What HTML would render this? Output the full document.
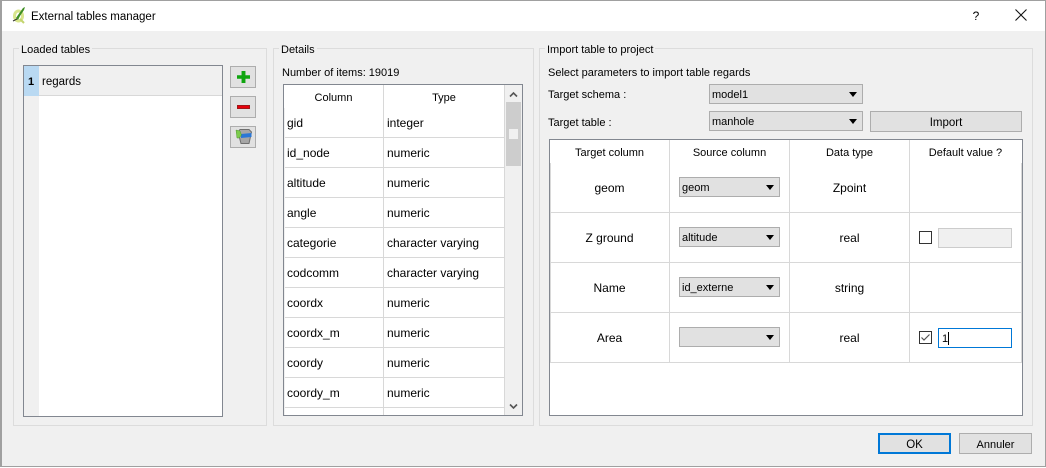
<!DOCTYPE html>
<html><head><meta charset="utf-8">
<style>
html,body{margin:0;padding:0;width:1046px;height:468px;overflow:hidden;background:#fff}
#w{position:relative;width:1046px;height:468px;font:11px "Liberation Sans",sans-serif;color:#000;background:#fff;overflow:hidden}
#w div,#w span{position:absolute;box-sizing:border-box}
#w span{white-space:pre;line-height:16px;height:16px;margin-top:1px}
#w span.t{font-size:12px;margin-top:0}
#w span.m{font-size:11.5px}
.g{border:1px solid #dcdcdc}
.b{background:#e1e1e1;border:1px solid #adadad}
.c{text-align:center}
.l{background:#d8d8d8}
.arr{width:0;height:0;border-left:4.5px solid transparent;border-right:4.5px solid transparent;border-top:5px solid #000}
</style></head><body>
<div id="w">
<div style="left:0;top:0;width:1046px;height:467px;border:1px solid #a0a0a0;border-left-width:2px;background:#fff"></div>
<div style="left:2px;top:31px;width:1043px;height:435px;background:#f0f0f0"></div>
<svg style="position:absolute;left:11px;top:6px" width="16" height="18" viewBox="0 0 16 18"><ellipse cx="7.5" cy="10" rx="5.5" ry="6.5" fill="#d8e58c"/><ellipse cx="7.5" cy="10" rx="2.5" ry="3.5" fill="#fff"/><path d="M5 12 L7 9 L12 2 L14 1 L13 4 L9 10 L7 14Z" fill="#3f8f24"/><path d="M9 13 L13 17" stroke="#c3d46f" stroke-width="2"/><path d="M2 15 L6 13" stroke="#333" stroke-width="1"/></svg>
<span class="m" style="left:31px;top:8px">External tables manager</span>
<span class="t" style="left:972px;top:8px;width:8px;text-align:center">?</span>
<svg style="position:absolute;left:1015px;top:9px" width="12" height="12"><path d="M.5 .5L11.5 11.5M11.5 .5L.5 11.5" stroke="#111" stroke-width="1.1"/></svg>

<!-- group 1 -->
<div class="g" style="left:13px;top:48px;width:254px;height:378px"></div>
<span style="left:19px;top:41px;background:#f0f0f0;padding:0 2px">Loaded tables</span>
<div style="left:23px;top:65px;width:200px;height:352px;border:1px solid #828790;background:#fff"></div>
<div style="left:24px;top:66px;width:15px;height:350px;background:#f0f0f0"></div>
<div style="left:39px;top:66px;width:183px;height:30px;background:#f0f0f0;border-bottom:1px solid #d8d8d8"></div>
<div style="left:24px;top:66px;width:15px;height:30px;background:#b9d9f2"></div>
<span style="left:28px;top:73px;font-weight:bold">1</span>
<span class="m" style="left:42px;top:73px">regards</span>
<div class="b" style="left:230px;top:66px;width:26px;height:22px"></div>
<div style="left:237px;top:71px;width:13px;height:12px;background:#0fa50f;clip-path:polygon(35% 0,65% 0,65% 35%,100% 35%,100% 65%,65% 65%,65% 100%,35% 100%,35% 65%,0 65%,0 35%,35% 35%)"></div>
<div class="b" style="left:230px;top:96px;width:26px;height:22px"></div>
<div style="left:237px;top:105px;width:13px;height:4px;background:#e8000c;border:1px solid #a01818"></div>
<div class="b" style="left:230px;top:126px;width:26px;height:22px"></div>
<svg style="position:absolute;left:235px;top:128px" width="18" height="18" viewBox="0 0 18 18"><path d="M3 4L5 1.5H14L16.5 4L14 15.5H6Z" fill="#a6a6a6" stroke="#6f6f6f"/><path d="M6 6L16.5 5V9L6 10Z" fill="#2a77d6"/><path d="M1 2L5 3L6.5 7L4 10L2 10Z" fill="#7ccb4c" stroke="#4f9a2c" stroke-width=".5"/></svg>

<!-- group 2 -->
<div class="g" style="left:273px;top:48px;width:261px;height:378px"></div>
<span style="left:279px;top:41px;background:#f0f0f0;padding:0 2px">Details</span>
<span style="left:282px;top:64px">Number of items: 19019</span>
<div style="left:283px;top:84px;width:240px;height:332px;border:1px solid #828790;background:#fff"></div>
<div style="left:284px;top:108px;width:1px;height:307px;background:#f0f0f0"></div>
<div class="l" style="left:383px;top:85px;width:1px;height:330px"></div>
<div class="l" style="left:504px;top:85px;width:1px;height:330px"></div>
<div style="left:505px;top:85px;width:17px;height:330px;background:#f0f0f0"></div>
<div style="left:506px;top:102px;width:15px;height:64px;background:#cdcdcd"></div>
<div style="left:509px;top:129px;width:9px;height:10px;background:#f0f0f0"></div>
<svg style="position:absolute;left:509px;top:91px" width="9" height="7"><path d="M1 5.5L4.5 2L8 5.5" fill="none" stroke="#555" stroke-width="1.6"/></svg>
<svg style="position:absolute;left:509px;top:403px" width="9" height="7"><path d="M1 1.5L4.5 5L8 1.5" fill="none" stroke="#555" stroke-width="1.6"/></svg>
<span class="c" style="left:284px;top:89px;width:99px">Column</span>
<span class="c" style="left:384px;top:89px;width:120px">Type</span>
<div class="l" style="left:285px;top:137px;width:219px;height:1px"></div>
<div class="l" style="left:285px;top:167px;width:219px;height:1px"></div>
<div class="l" style="left:285px;top:197px;width:219px;height:1px"></div>
<div class="l" style="left:285px;top:227px;width:219px;height:1px"></div>
<div class="l" style="left:285px;top:257px;width:219px;height:1px"></div>
<div class="l" style="left:285px;top:287px;width:219px;height:1px"></div>
<div class="l" style="left:285px;top:317px;width:219px;height:1px"></div>
<div class="l" style="left:285px;top:347px;width:219px;height:1px"></div>
<div class="l" style="left:285px;top:377px;width:219px;height:1px"></div>
<div class="l" style="left:285px;top:407px;width:219px;height:1px"></div>
<span class="t" style="left:287px;top:115px">gid</span><span class="t" style="left:387px;top:115px">integer</span>
<span class="t" style="left:287px;top:145px">id_node</span><span class="t" style="left:387px;top:145px">numeric</span>
<span class="t" style="left:287px;top:175px">altitude</span><span class="t" style="left:387px;top:175px">numeric</span>
<span class="t" style="left:287px;top:205px">angle</span><span class="t" style="left:387px;top:205px">numeric</span>
<span class="t" style="left:287px;top:235px">categorie</span><span class="t" style="left:387px;top:235px">character varying</span>
<span class="t" style="left:287px;top:265px">codcomm</span><span class="t" style="left:387px;top:265px">character varying</span>
<span class="t" style="left:287px;top:295px">coordx</span><span class="t" style="left:387px;top:295px">numeric</span>
<span class="t" style="left:287px;top:325px">coordx_m</span><span class="t" style="left:387px;top:325px">numeric</span>
<span class="t" style="left:287px;top:355px">coordy</span><span class="t" style="left:387px;top:355px">numeric</span>
<span class="t" style="left:287px;top:385px">coordy_m</span><span class="t" style="left:387px;top:385px">numeric</span>

<!-- group 3 -->
<div class="g" style="left:539px;top:48px;width:494px;height:378px"></div>
<span style="left:545px;top:41px;background:#f0f0f0;padding:0 2px">Import table to project</span>
<span style="left:548px;top:64px">Select parameters to import table regards</span>
<span style="left:548px;top:86px">Target schema :</span>
<span style="left:548px;top:114px">Target table :</span>
<div class="b" style="left:709px;top:84px;width:154px;height:20px"></div>
<span style="left:712px;top:86px">model1</span>
<div class="arr" style="left:849px;top:92px"></div>
<div class="b" style="left:709px;top:111px;width:154px;height:20px"></div>
<span style="left:712px;top:113px">manhole</span>
<div class="arr" style="left:849px;top:119px"></div>
<div class="b" style="left:870px;top:111px;width:152px;height:21px"></div>
<span class="c m" style="left:870px;top:114px;width:152px">Import</span>

<div style="left:549px;top:139px;width:474px;height:277px;border:1px solid #828790;background:#fff"></div>
<div class="l" style="left:550px;top:163px;width:1px;height:200px"></div>
<div class="l" style="left:669px;top:140px;width:1px;height:223px"></div>
<div class="l" style="left:789px;top:140px;width:1px;height:223px"></div>
<div class="l" style="left:909px;top:140px;width:1px;height:223px"></div>
<div class="l" style="left:1021px;top:163px;width:1px;height:200px"></div>
<div class="l" style="left:551px;top:212px;width:470px;height:1px"></div>
<div class="l" style="left:551px;top:262px;width:470px;height:1px"></div>
<div class="l" style="left:551px;top:312px;width:470px;height:1px"></div>
<div class="l" style="left:551px;top:362px;width:470px;height:1px"></div>
<span class="c" style="left:550px;top:144px;width:119px">Target column</span>
<span class="c" style="left:670px;top:144px;width:119px">Source column</span>
<span class="c" style="left:790px;top:144px;width:119px">Data type</span>
<span class="c" style="left:910px;top:144px;width:111px">Default value ?</span>
<span class="c t" style="left:550px;top:180px;width:119px">geom</span>
<span class="c t" style="left:550px;top:230px;width:119px">Z ground</span>
<span class="c t" style="left:550px;top:280px;width:119px">Name</span>
<span class="c t" style="left:550px;top:330px;width:119px">Area</span>
<span class="c t" style="left:790px;top:180px;width:119px">Zpoint</span>
<span class="c t" style="left:790px;top:230px;width:119px">real</span>
<span class="c t" style="left:790px;top:280px;width:119px">string</span>
<span class="c t" style="left:790px;top:330px;width:119px">real</span>

<div class="b" style="left:679px;top:177px;width:101px;height:20px"></div>
<span style="left:682px;top:179px">geom</span><div class="arr" style="left:766px;top:185px"></div>
<div class="b" style="left:679px;top:227px;width:101px;height:20px"></div>
<span style="left:682px;top:229px">altitude</span><div class="arr" style="left:766px;top:235px"></div>
<div class="b" style="left:679px;top:277px;width:101px;height:20px"></div>
<span style="left:682px;top:279px">id_externe</span><div class="arr" style="left:766px;top:285px"></div>
<div class="b" style="left:679px;top:327px;width:101px;height:20px"></div>
<div class="arr" style="left:766px;top:335px"></div>

<div style="left:919px;top:231px;width:13px;height:13px;border:1px solid #333;background:#fff"></div>
<div style="left:938px;top:228px;width:74px;height:20px;border:1px solid #ccc;background:#f0f0f0"></div>
<div style="left:919px;top:331px;width:13px;height:13px;border:1px solid #333;background:#fff"></div>
<svg style="position:absolute;left:919px;top:331px" width="13" height="13"><path d="M2.5 6.5L5 9L10.5 3.5" fill="none" stroke="#555" stroke-width="1.2"/></svg>
<div style="left:938px;top:328px;width:74px;height:20px;border:1px solid #0078d7;background:#fff"></div>
<span style="left:942px;top:330px">1</span>
<div style="left:948px;top:332px;width:1px;height:13px;background:#000"></div>

<div class="b" style="left:878px;top:433px;width:73px;height:21px;border:2px solid #0078d7"></div>
<span class="c m" style="left:878px;top:436px;width:73px">OK</span>
<div class="b" style="left:959px;top:433px;width:73px;height:21px"></div>
<span class="c" style="left:959px;top:436px;width:73px">Annuler</span>
</div>
</body></html>
